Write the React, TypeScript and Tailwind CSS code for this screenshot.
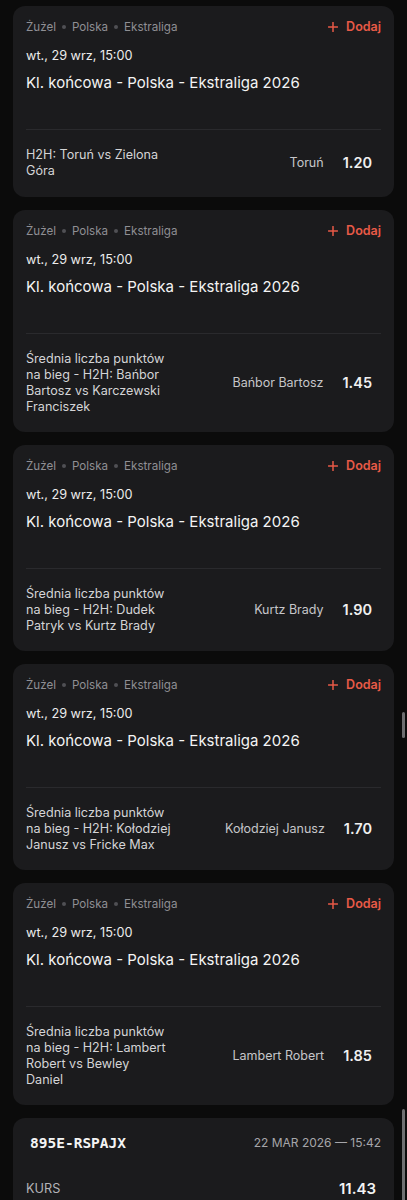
import React from "react";

type Bet = { market: string[]; selection: string; odds: string };

const bets: Bet[] = [
  { market: ["H2H: Toruń vs Zielona", "Góra"], selection: "Toruń", odds: "1.20" },
  {
    market: ["Średnia liczba punktów", "na bieg - H2H: Bańbor", "Bartosz vs Karczewski", "Franciszek"],
    selection: "Bańbor Bartosz",
    odds: "1.45",
  },
  {
    market: ["Średnia liczba punktów", "na bieg - H2H: Dudek", "Patryk vs Kurtz Brady"],
    selection: "Kurtz Brady",
    odds: "1.90",
  },
  {
    market: ["Średnia liczba punktów", "na bieg - H2H: Kołodziej", "Janusz vs Fricke Max"],
    selection: "Kołodziej Janusz",
    odds: "1.70",
  },
  {
    market: ["Średnia liczba punktów", "na bieg - H2H: Lambert", "Robert vs Bewley", "Daniel"],
    selection: "Lambert Robert",
    odds: "1.85",
  },
];

function Card({ bet, first }: { bet: Bet; first?: boolean }) {
  return (
    <div className="rounded-[12px] bg-[#1b1b1d] px-[13px]">
      <div className="flex items-center justify-between pt-[12px] leading-[18px]">
        <div className="flex items-center text-[11.6px] text-[#8f8f94]">
          <span>Żużel</span>
          <span className="mx-[6px] inline-block h-[4px] w-[4px] rounded-full bg-[#505054]" />
          <span>Polska</span>
          <span className="mx-[6px] inline-block h-[4px] w-[4px] rounded-full bg-[#505054]" />
          <span>Ekstraliga</span>
        </div>
        <div className="flex items-center gap-[8px] text-[12.5px] font-semibold text-[#e85a47]">
          <svg width="10" height="10" viewBox="0 0 10 10" fill="none">
            <path d="M5 0.5V9.5M0.5 5H9.5" stroke="#e85a47" strokeWidth="1.5" strokeLinecap="round" />
          </svg>
          <span>Dodaj</span>
        </div>
      </div>
      <div className="mt-[10px] text-[12.7px] leading-[20px] text-[#ececec]">wt., 29 wrz, 15:00</div>
      <div className="mt-[6px] text-[15px] leading-[22px] text-[#f4f4f4]">
        Kl. końcowa - Polska - Ekstraliga 2026
      </div>
      <div className="mt-[35px] h-px bg-[#2a2a2d]" />
      <div className={`flex items-center pt-[17px] ${first ? "pb-[18px]" : "pb-[17px]"}`}>
        <div className="w-[150px] text-[12.6px] leading-[16px] text-[#d4d4d6]">
          {bet.market.map((l, i) => (
            <div key={i} className="whitespace-nowrap">{l}</div>
          ))}
        </div>
        <div className="ml-auto flex items-center gap-[19px] pr-[9px]">
          <span className="text-[12.5px] text-[#c6c6c9]">{bet.selection}</span>
          <span className="text-[14.5px] font-semibold text-[#f0f0f0]">{bet.odds}</span>
        </div>
      </div>
    </div>
  );
}

export default function App() {
  return (
    <div
      className="relative min-h-[1200px] overflow-hidden bg-[#0b0b0b] pt-[6px] pl-[13px] pr-[13px]"
      style={{ fontFamily: "Inter, 'Noto Sans', sans-serif" }}
    >
      <div className="flex flex-col gap-[13px]">
        {bets.map((b, i) => (
          <Card key={i} bet={b} first={i === 0} />
        ))}
        <div className="rounded-[12px] bg-[#1b1b1d] px-[13px] pt-[15px] pb-[20px]">
          <div className="flex items-center justify-between leading-[20px]">
            <span
              className="pl-[4px] text-[14.5px] font-bold text-[#f4f4f4]"
              style={{ fontFamily: "'DejaVu Sans Mono', monospace" }}
            >
              895E-RSPAJX
            </span>
            <span className="text-[12px] text-[#a6a6aa]">22 MAR 2026 — 15:42</span>
          </div>
          <div className="mt-[25px] flex items-center justify-between leading-[22px]">
            <span className="text-[12.7px] text-[#b4b4b8]">KURS</span>
            <span className="pr-[5px] text-[15px] font-semibold text-[#f4f4f4]">11.43</span>
          </div>
        </div>
      </div>
      <div className="absolute right-[2px] top-[712px] h-[26px] w-[3px] rounded-full bg-[#6e6e70]" />
      <div className="absolute right-[2px] top-[1109px] h-[100px] w-[3px] rounded-full bg-[#707072]" />
    </div>
  );
}
